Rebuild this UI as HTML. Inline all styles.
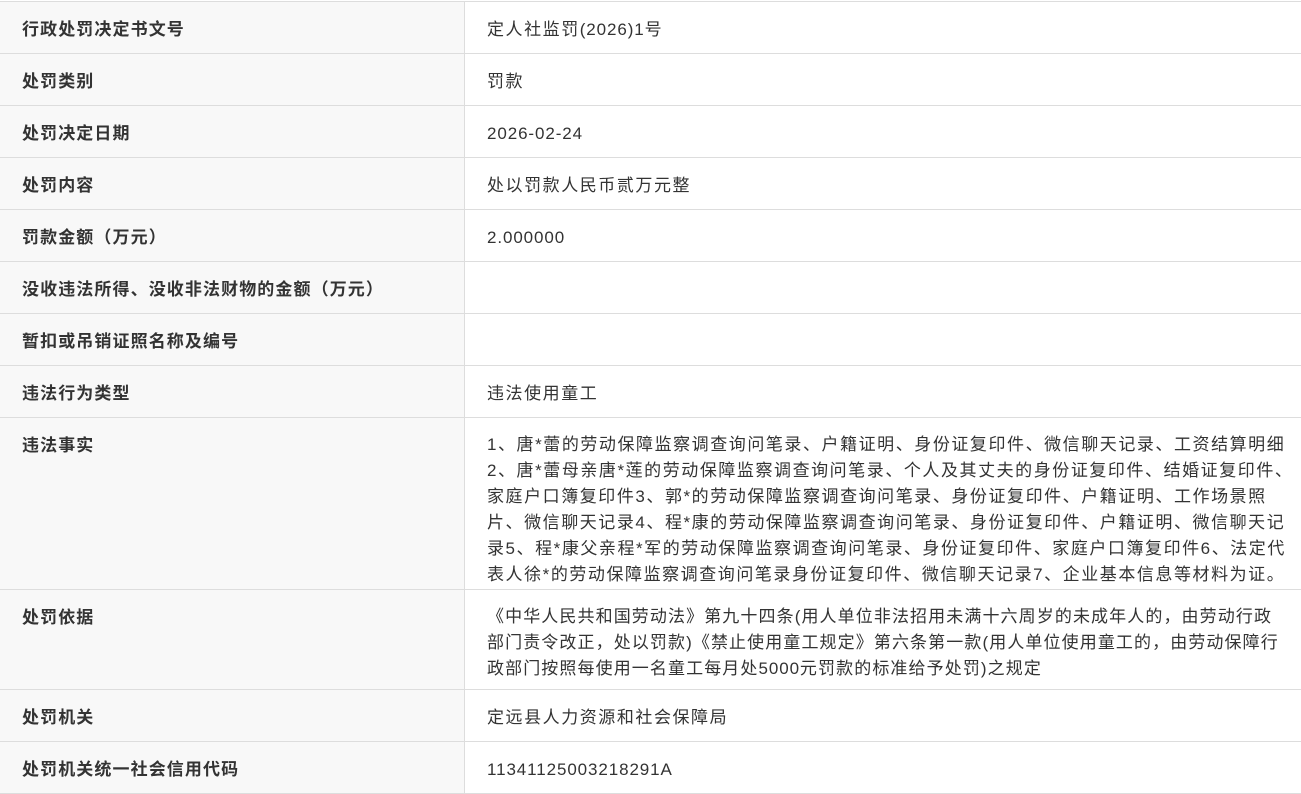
<!DOCTYPE html>
<html><head><meta charset="utf-8"><style>
html,body{margin:0;padding:0;background:#fff;width:1301px;height:794px;overflow:hidden}
body{font-family:"Liberation Sans","Noto Sans CJK SC",sans-serif;font-size:17px;letter-spacing:0.9px;color:#333}
.t{position:absolute;left:0;top:1px;width:1301px;border-top:1px solid #ddd}
.r{display:flex;border-bottom:1px solid #ddd;box-sizing:border-box}
.k{width:465px;flex:none;background:#f8f8f8;border-right:1px solid #ddd;padding:15px 0 0 22px;box-sizing:border-box;font-weight:bold;line-height:26px;color:#333;letter-spacing:1.1px}
.v{flex:1;padding:15px 0 0 22px;line-height:26px;box-sizing:border-box;white-space:nowrap;letter-spacing:1.55px}
.n{letter-spacing:0.9px}
.m .v{padding-top:14px}
</style></head><body>
<div class="t">
<div class="r" style="height:52px"><div class="k">行政处罚决定书文号</div><div class="v">定人社监罚<span class="n">(2026)1</span>号</div></div>
<div class="r" style="height:52px"><div class="k">处罚类别</div><div class="v">罚款</div></div>
<div class="r" style="height:52px"><div class="k">处罚决定日期</div><div class="v n">2026-02-24</div></div>
<div class="r" style="height:52px"><div class="k">处罚内容</div><div class="v">处以罚款人民币贰万元整</div></div>
<div class="r" style="height:52px"><div class="k">罚款金额（万元）</div><div class="v n">2.000000</div></div>
<div class="r" style="height:52px"><div class="k">没收违法所得、没收非法财物的金额（万元）</div><div class="v"></div></div>
<div class="r" style="height:52px"><div class="k">暂扣或吊销证照名称及编号</div><div class="v"></div></div>
<div class="r" style="height:52px"><div class="k">违法行为类型</div><div class="v">违法使用童工</div></div>
<div class="r m" style="height:172px"><div class="k">违法事实</div><div class="v">1、唐*蕾的劳动保障监察调查询问笔录、户籍证明、身份证复印件、微信聊天记录、工资结算明细<br>2、唐*蕾母亲唐*莲的劳动保障监察调查询问笔录、个人及其丈夫的身份证复印件、结婚证复印件、<br>家庭户口簿复印件3、郭*的劳动保障监察调查询问笔录、身份证复印件、户籍证明、工作场景照<br>片、微信聊天记录4、程*康的劳动保障监察调查询问笔录、身份证复印件、户籍证明、微信聊天记<br>录5、程*康父亲程*军的劳动保障监察调查询问笔录、身份证复印件、家庭户口簿复印件6、法定代<br>表人徐*的劳动保障监察调查询问笔录身份证复印件、微信聊天记录7、企业基本信息等材料为证。</div></div>
<div class="r m" style="height:100px"><div class="k">处罚依据</div><div class="v" style="letter-spacing:1.1px">《中华人民共和国劳动法》第九十四条(用人单位非法招用未满十六周岁的未成年人的，由劳动行政<br>部门责令改正，处以罚款)《禁止使用童工规定》第六条第一款(用人单位使用童工的，由劳动保障行<br>政部门按照每使用一名童工每月处<span class="n">5000</span>元罚款的标准给予处罚)之规定</div></div>
<div class="r" style="height:52px"><div class="k">处罚机关</div><div class="v">定远县人力资源和社会保障局</div></div>
<div class="r" style="height:52px"><div class="k">处罚机关统一社会信用代码</div><div class="v n">11341125003218291A</div></div>
</div>
</body></html>
